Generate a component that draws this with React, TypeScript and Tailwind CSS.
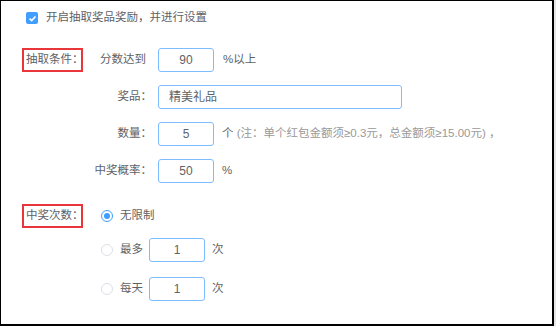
import React from "react";

const font = { fontFamily: '"Liberation Sans", "Noto Sans CJK SC", sans-serif' };

function Box({ value, className = "" }: { value: string; className?: string }) {
  return (
    <div
      className={`h-[24px] w-[56px] rounded-[3px] border border-[#7dbdff] flex items-center justify-center text-[12px] text-[#606266] ${className}`}
    >
      {value}
    </div>
  );
}

function RedTag({ text }: { text: string }) {
  return (
    <div className="ml-[21px] h-[24px] w-[61px] border-2 border-[#e8363a] flex items-center pl-[2px] whitespace-nowrap text-[#606266]">
      {text}
    </div>
  );
}

function Radio({ checked }: { checked?: boolean }) {
  if (checked) {
    return (
      <span className="w-[12px] h-[12px] rounded-full border-[1.5px] border-[#409eff] flex items-center justify-center">
        <span className="w-[6px] h-[6px] rounded-full bg-[#409eff]" />
      </span>
    );
  }
  return <span className="w-[12px] h-[12px] rounded-full border border-[#dcdfe6]" />;
}

export default function App() {
  return (
    <div className="w-[556px] h-[327px] bg-white flex text-[11.5px] text-[#606266]" style={font}>
      <div className="w-[554px] h-[326px] border-t border-l border-r-2 border-b-2 border-black flex flex-col">
        {/* 开启 */}
        <div className="mt-[5px] h-[24px] flex items-center pl-[25px]">
          <span className="w-[12px] h-[12px] rounded-[2px] bg-[#409eff] flex items-center justify-center">
            <svg width="9" height="9" viewBox="0 0 10 10">
              <path d="M1.8 5.2 L4.1 7.4 L8.3 2.7" fill="none" stroke="white" strokeWidth="1.8" />
            </svg>
          </span>
          <span className="ml-[8px]">开启抽取奖品奖励，并进行设置</span>
        </div>

        {/* 抽取条件 */}
        <div className="mt-[18px] h-[24px] flex items-center">
          <RedTag text="抽取条件：" />
          <div className="w-[69px] pl-[17px] whitespace-nowrap">分数达到</div>
          <Box value="90" className="ml-[6px]" />
          <span className="ml-[9px]">%以上</span>
        </div>

        <div className="mt-[13px] h-[24px] flex items-center">
          <div className="w-[151px] text-right">奖品：</div>
          <div className="ml-[6px] h-[24px] w-[244px] rounded-[3px] border border-[#7dbdff] flex items-center pl-[10px] text-[12px] text-[#606266]">
            精美礼品
          </div>
        </div>

        <div className="mt-[13px] h-[24px] flex items-center">
          <div className="w-[151px] text-right">数量：</div>
          <Box value="5" className="ml-[6px]" />
          <span className="ml-[8px] whitespace-nowrap">
            个 <span className="text-[#999999]">(注：单个红包金额须≥0.3元，总金额须≥15.00元) ，</span>
          </span>
        </div>

        <div className="mt-[13px] h-[24px] flex items-center">
          <div className="w-[151px] text-right">中奖概率：</div>
          <Box value="50" className="ml-[6px]" />
          <span className="ml-[8px]">%</span>
        </div>

        {/* 中奖次数 */}
        <div className="mt-[21px] flex">
          <RedTag text="中奖次数：" />
          <div className="ml-[18px] flex flex-col">
            <div className="h-[24px] flex items-center">
              <Radio checked />
              <span className="ml-[7px]">无限制</span>
            </div>
            <div className="mt-[10px] h-[24px] flex items-center">
              <Radio />
              <span className="ml-[7px]">最多</span>
              <Box value="1" className="ml-[6px]" />
              <span className="ml-[7px]">次</span>
            </div>
            <div className="mt-[15px] h-[24px] flex items-center">
              <Radio />
              <span className="ml-[7px]">每天</span>
              <Box value="1" className="ml-[6px]" />
              <span className="ml-[7px]">次</span>
            </div>
          </div>
        </div>
      </div>
      <div className="w-[2px] h-[326px] bg-[#e6e6e6]" />
    </div>
  );
}
